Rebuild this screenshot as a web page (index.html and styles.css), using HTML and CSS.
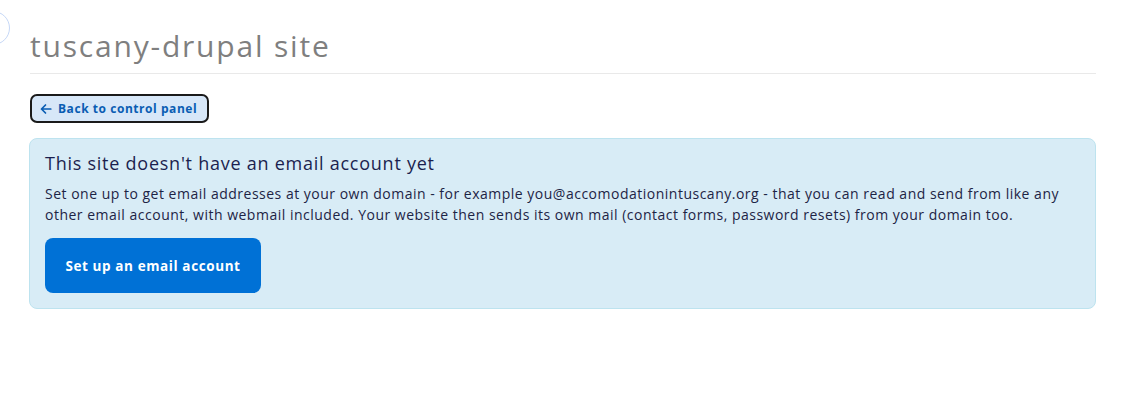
FILE: index.html
```html
<!DOCTYPE html>
<html lang="en">
<head>
<meta charset="utf-8">
<title>tuscany-drupal site</title>
<link rel="stylesheet" href="styles.css">
</head>
<body>
<span class="nav-toggle" aria-hidden="true"></span>
<main class="page">
  <header class="page-header">
    <h1 class="page-title">tuscany-drupal site</h1>
  </header>
  <div class="actions">
    <a class="back-link" href="#">
      <svg class="back-icon" viewBox="0 0 12 12" width="12" height="12" aria-hidden="true">
        <path d="M10.8 6H1.5M5.5 2L1.5 6l4 4" fill="none" stroke="currentColor" stroke-width="1.7" stroke-linecap="round" stroke-linejoin="round"/>
      </svg>
      <span>Back to control panel</span>
    </a>
  </div>
  <section class="notice">
    <h2 class="notice-title">This site doesn't have an email account yet</h2>
    <p class="notice-text">Set one up to get email addresses at your own domain - for example you@accomodationintuscany.org - that you can read and send from like any other email account, with webmail included. Your website then sends its own mail (contact forms, password resets) from your domain too.</p>
    <a class="primary-btn" href="#">Set up an email account</a>
  </section>
</main>
</body>
</html>
```
FILE: styles.css
```css
* { box-sizing: border-box; }
html, body { margin: 0; padding: 0; background: #fff; }
body {
  font-family: "Open Sans", "DejaVu Sans", sans-serif;
  color: #1d2445;
  position: relative;
  overflow: hidden;
  height: 411px;
}
.nav-toggle {
  position: absolute;
  left: -24px;
  top: 11px;
  width: 34px;
  height: 34px;
  border: 1px solid #c6d8f7;
  border-radius: 50%;
  background: #fff;
}
.page {
  padding: 0 31px 0 29px;
}
.page-header {
  padding-top: 26px;
  border-bottom: 1px solid #e9e9e9;
  margin-left: 1px;
}
.page-title {
  margin: 0;
  font-size: 30px;
  font-weight: 400;
  letter-spacing: 1.8px;
  color: #7f7f7f;
  line-height: 40px;
  height: 47px;
}
.actions {
  padding-top: 20px;
  margin-left: 1px;
}
.back-link {
  display: inline-flex;
  align-items: center;
  gap: 6px;
  width: 179px;
  height: 29px;
  padding: 0 0 0 8px;
  border: 2px solid #1a1a1a;
  border-radius: 7px;
  background: #d7e7f8;
  color: #0a5db3;
  text-decoration: none;
  font-size: 12px;
  font-weight: 700;
  letter-spacing: 0.55px;
}
.back-icon { flex: none; }
.notice {
  margin-top: 15px;
  background: #d8ecf6;
  border: 1px solid #bde3ef;
  border-radius: 8px;
  padding: 12px 12px 15px 15px;
  height: 171px;
}
.notice-title {
  margin: 0;
  font-size: 18px;
  font-weight: 500;
  letter-spacing: 0.75px;
  color: #1b1f4f;
  line-height: 24px;
}
.notice-text {
  margin: 8px 0 13px;
  font-size: 14px;
  letter-spacing: 0.5px;
  line-height: 21px;
  color: #1d2445;
}
.primary-btn {
  display: inline-flex;
  align-items: center;
  justify-content: center;
  width: 216px;
  height: 55px;
  border-radius: 8px;
  background: #0071d6;
  color: #fff;
  text-decoration: none;
  font-size: 13.5px;
  font-weight: 700;
  letter-spacing: 0.6px;
}
```
